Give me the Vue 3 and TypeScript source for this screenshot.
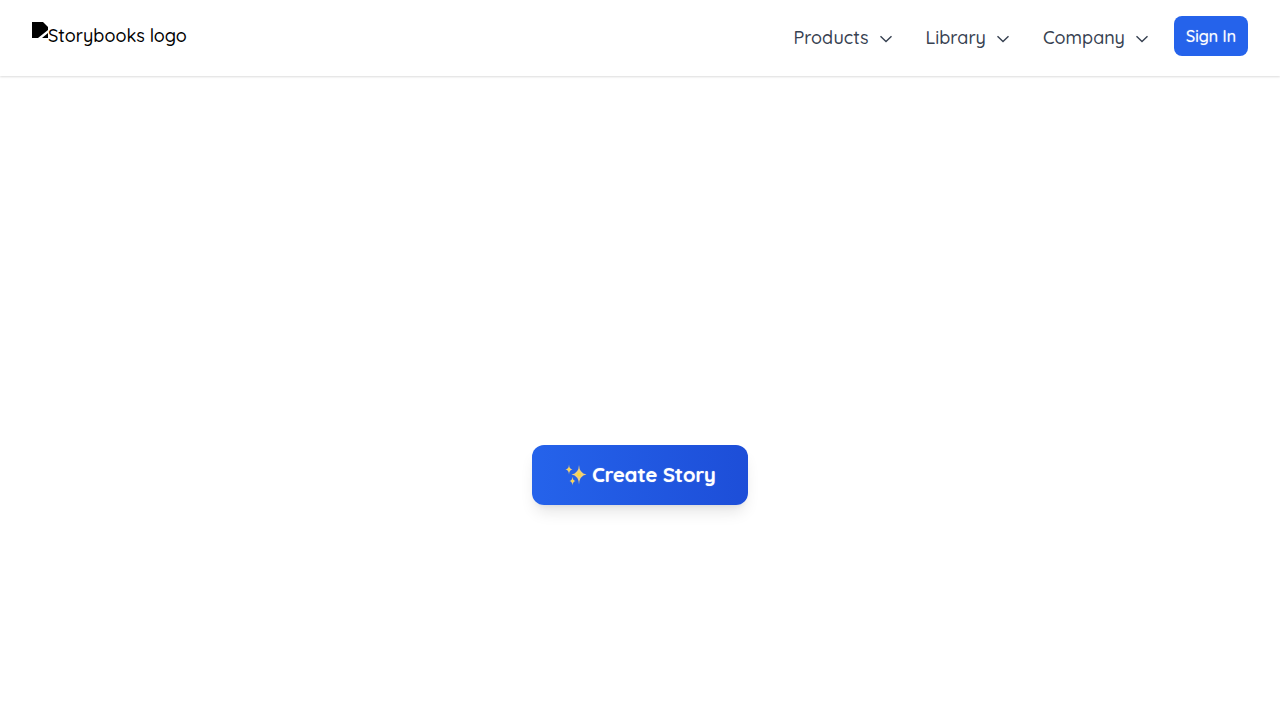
<script setup lang="ts">
interface MenuItem {
  label: string
}

const menu: MenuItem[] = [
  { label: 'Products' },
  { label: 'Library' },
  { label: 'Company' },
]
</script>

<template>
  <div class="page">
    <header class="header">
      <a class="logo" href="#">
        <svg class="logo-icon" viewBox="0 0 16 16" aria-hidden="true">
          <path d="M0 0H11L16 5V8L6 16H0Z" />
          <path d="M16 11V16H10Z" />
        </svg>
        <span>Storybooks logo</span>
      </a>
      <div class="actions">
        <nav class="menu">
          <button v-for="item in menu" :key="item.label" class="menu-item" type="button">
            <span>{{ item.label }}</span>
            <svg class="chevron" viewBox="0 0 16 16" aria-hidden="true">
              <path d="M2.5 6.2L8 11.5L13.5 6.2" />
            </svg>
          </button>
        </nav>
        <button class="sign-in" type="button">Sign In</button>
      </div>
    </header>
    <main class="main">
      <button class="create" type="button">
        <svg class="sparkles" viewBox="0 0 24 24" aria-hidden="true">
          <path class="star" d="M15 2Q15.3 10.2 22.5 11.5Q15.3 12.8 15 21.5Q14.7 12.8 7.5 11.5Q14.7 10.2 15 2Z" />
          <path class="star" d="M5 1.5Q5.2 6 8.5 6.5Q5.2 7 5 11.5Q4.8 7 1.5 6.5Q4.8 6 5 1.5Z" />
          <path class="star" d="M8.5 13.5Q8.7 17.5 11.5 18Q8.7 18.5 8.5 22.5Q8.3 18.5 5.5 18Q8.3 17.5 8.5 13.5Z" />
          <circle class="core" cx="15" cy="11.5" r="2" />
          <circle class="core" cx="5" cy="6.5" r="1" />
          <circle class="core" cx="8.5" cy="18" r="1" />
        </svg>
        <span>Create Story</span>
      </button>
    </main>
  </div>
</template>

<style>
body {
  margin: 0;
  background: #fff;
}
</style>

<style scoped>
.page {
  min-height: 100vh;
  display: flex;
  flex-direction: column;
  font-family: Quicksand, Lato, "Noto Sans", sans-serif;
}

button {
  border: 0;
  padding: 0;
  background: none;
  font: inherit;
  cursor: pointer;
}

.header {
  display: flex;
  align-items: flex-start;
  justify-content: space-between;
  min-height: 44px;
  padding: 16px 32px;
  background: #fff;
  box-shadow: 0 1px 2px rgba(0, 0, 0, 0.14);
}

.logo {
  display: flex;
  align-items: flex-start;
  padding-top: 6px;
  color: #000;
  font-size: 18px;
  font-weight: 500;
  line-height: 28px;
  text-decoration: none;
}

.logo-icon {
  width: 16px;
  height: 16px;
}

.actions {
  display: flex;
  align-items: center;
  gap: 24px;
}

.menu {
  display: flex;
  gap: 32px;
}

.menu-item {
  display: flex;
  align-items: center;
  gap: 9px;
  padding-top: 4px;
  color: #374151;
  font-size: 18px;
  font-weight: 500;
  line-height: 28px;
}

.chevron {
  width: 16px;
  height: 16px;
  fill: none;
  stroke: currentColor;
  stroke-width: 1.4;
}

.sign-in {
  height: 40px;
  padding: 0 12px;
  border-radius: 8px;
  background: #2563eb;
  color: #fff;
  font-size: 16px;
  font-weight: 500;
  line-height: 24px;
  text-shadow: 0 0 1px rgba(255, 255, 255, 0.6);
}

.main {
  flex: 1;
  display: flex;
  justify-content: center;
  align-items: center;
  padding-top: 154px;
}

.create {
  display: flex;
  align-items: center;
  gap: 4px;
  padding: 16px 32px;
  border-radius: 12px;
  background: linear-gradient(to right, #2563eb, #1d4ed8);
  box-shadow: 0 10px 15px -3px rgba(0, 0, 0, 0.1), 0 4px 6px -4px rgba(0, 0, 0, 0.1);
  color: #fff;
  font-size: 20px;
  font-weight: 700;
  line-height: 28px;
  text-shadow: 0 0 1px rgba(255, 255, 255, 0.6);
}

.sparkles {
  width: 24px;
  height: 24px;
}

.star {
  fill: #efcf7c;
}

.core {
  fill: #fdd835;
}
</style>
